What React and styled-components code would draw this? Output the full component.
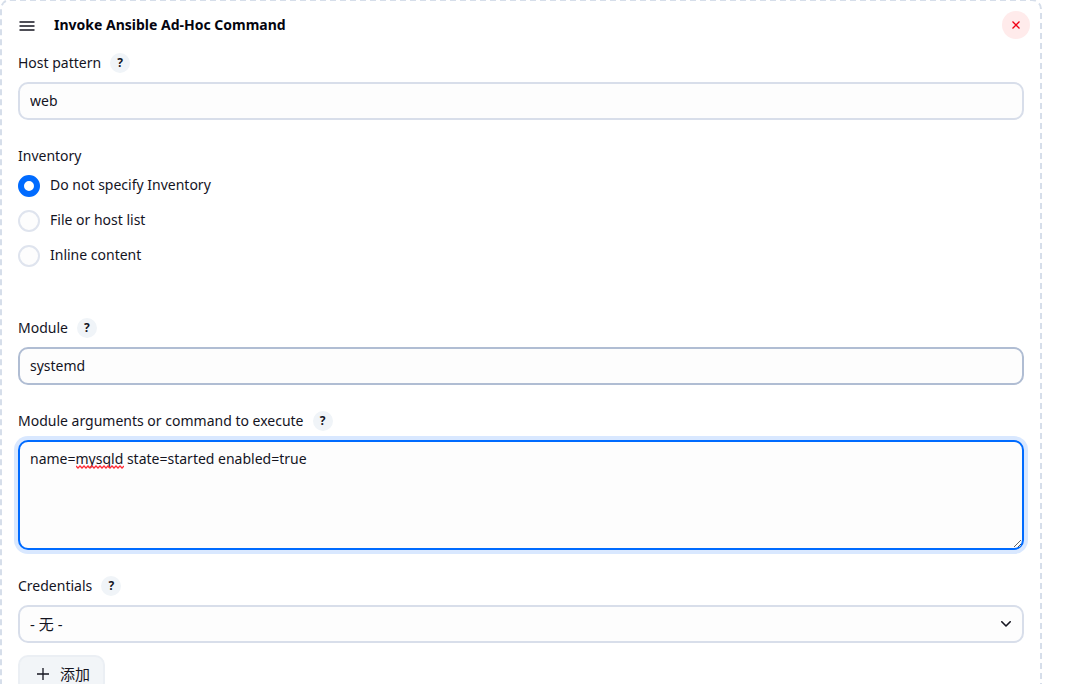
import { useState } from 'react'
import styled, { createGlobalStyle } from 'styled-components'

const inventoryOptions = [
    { value: 'none', label: 'Do not specify Inventory' },
    { value: 'path', label: 'File or host list' },
    { value: 'content', label: 'Inline content' },
]

export default function App() {
    const [host, setHost] = useState('web')
    const [inventory, setInventory] = useState('none')
    const [moduleName, setModuleName] = useState('systemd')
    const [args, setArgs] = useState('name=mysqld state=started enabled=true')

    return (
        <>
            <GlobalStyle />
            <StepCard>
                <StepHeader>
                    <DragIcon viewBox="0 0 16 12" aria-hidden="true">
                        <path d="M0.5 2h15M0.5 6h15M0.5 10h15" />
                    </DragIcon>
                    <StepTitle>Invoke Ansible Ad-Hoc Command</StepTitle>
                    <CloseButton type="button" aria-label="Delete">
                        <svg width="8" height="8" viewBox="0 0 8 8" aria-hidden="true">
                            <path d="M0.5 0.5l7 7M7.5 0.5l-7 7" />
                        </svg>
                    </CloseButton>
                </StepHeader>

                <Field>
                    <LabelRow>
                        <label htmlFor="host">Host pattern</label>
                        <HelpButton type="button" aria-label="Help for Host pattern">?</HelpButton>
                    </LabelRow>
                    <TextInput id="host" value={host} onChange={(e) => setHost(e.target.value)} />
                </Field>

                <RadioGroup>
                    <Legend>Inventory</Legend>
                    <RadioList>
                        {inventoryOptions.map(({ value, label }) => (
                            <RadioLabel key={value}>
                                <Radio
                                    name="inventory"
                                    value={value}
                                    checked={inventory === value}
                                    onChange={() => setInventory(value)}
                                />
                                <span>{label}</span>
                            </RadioLabel>
                        ))}
                    </RadioList>
                </RadioGroup>

                <Field>
                    <LabelRow>
                        <label htmlFor="module">Module</label>
                        <HelpButton type="button" aria-label="Help for Module">?</HelpButton>
                    </LabelRow>
                    <TextInput
                        id="module"
                        $hovered
                        value={moduleName}
                        onChange={(e) => setModuleName(e.target.value)}
                    />
                </Field>

                <Field>
                    <LabelRow>
                        <label htmlFor="args">Module arguments or command to execute</label>
                        <HelpButton type="button" aria-label="Help for Module arguments">?</HelpButton>
                    </LabelRow>
                    <TextAreaWrapper>
                        <TextArea
                            id="args"
                            spellCheck={false}
                            value={args}
                            onChange={(e) => setArgs(e.target.value)}
                        />
                        <Squiggle viewBox="0 0 48 4" aria-hidden="true">
                            <path d="M0 1l2 2l2 -2l2 2l2 -2l2 2l2 -2l2 2l2 -2l2 2l2 -2l2 2l2 -2l2 2l2 -2l2 2l2 -2l2 2l2 -2l2 2l2 -2l2 2l2 -2l2 2l2 -2" />
                        </Squiggle>
                    </TextAreaWrapper>
                </Field>

                <Field>
                    <LabelRow>
                        <label htmlFor="credentials">Credentials</label>
                        <HelpButton type="button" aria-label="Help for Credentials">?</HelpButton>
                    </LabelRow>
                    <SelectWrapper>
                        <Select id="credentials" defaultValue="">
                            <option value="">- 无 -</option>
                        </Select>
                        <Chevron viewBox="0 0 10 6" aria-hidden="true">
                            <path d="M0.8 0.8l4.2 4.2l4.2 -4.2" />
                        </Chevron>
                    </SelectWrapper>
                    <AddButton type="button">
                        <svg width="12" height="12" viewBox="0 0 12 12" aria-hidden="true">
                            <path d="M6 0v12M0 6h12" />
                        </svg>
                        添加
                    </AddButton>
                </Field>
            </StepCard>
        </>
    )
}

const GlobalStyle = createGlobalStyle`
    * {
        box-sizing: border-box;
    }
    body {
        margin: 0;
        overflow: hidden;
        background: #fff;
        color: #14141f;
        font-family: "Noto Sans", "Noto Sans CJK SC", sans-serif;
        font-size: 14px;
        line-height: 22px;
    }
    button, input, select, textarea {
        font: inherit;
        color: inherit;
    }
`

const StepCard = styled.section`
    margin: -1px 48px 0 0;
    padding: 10px 16px 24px;
    border: 2px dashed #d6deea;
    border-radius: 10px;
`

const StepHeader = styled.header`
    display: flex;
    align-items: center;
    height: 28px;
    margin: 0 -6px 13px 1px;
`

const DragIcon = styled.svg`
    width: 16px;
    height: 12px;
    margin: 2px 19px 0 0;
    fill: none;
    stroke: #14141f;
    stroke-width: 1.5;
`

const StepTitle = styled.h2`
    flex: 1;
    margin: 0;
    font-size: 14px;
    font-weight: 700;
    color: #05050f;
`

const CloseButton = styled.button`
    display: grid;
    place-items: center;
    width: 28px;
    height: 28px;
    padding: 0;
    border: 0;
    border-radius: 50%;
    background: #ffebeb;

    path {
        stroke: #f00014;
        stroke-width: 1.3;
    }
`

const Field = styled.div`
    margin-bottom: 25px;
`

const LabelRow = styled.div`
    display: flex;
    align-items: center;
    gap: 9px;
    margin-bottom: 8px;
`

const HelpButton = styled.button`
    width: 20px;
    height: 20px;
    padding: 0;
    border: 0;
    border-radius: 50%;
    background: #f0f4f8;
    font-size: 12px;
    font-weight: 700;
    line-height: 20px;
    text-align: center;
`

const TextInput = styled.input.attrs({ type: 'text' })`
    display: block;
    width: 100%;
    height: 38px;
    padding: 0 10px 2px;
    border: 2px solid ${({ $hovered }) => ($hovered ? '#b0bdd3' : '#d8deea')};
    border-radius: 10px;
    outline: none;
    background: #fdfdfd;
`

const RadioGroup = styled.fieldset`
    margin: 0 0 50px;
    padding: 0;
    border: 0;
`

const Legend = styled.legend`
    margin-bottom: 8px;
    padding: 0;
`

const RadioList = styled.div`
    display: flex;
    flex-direction: column;
    align-items: flex-start;
    gap: 13px;
`

const RadioLabel = styled.label`
    display: flex;
    gap: 10px;
    line-height: 20px;
`

const Radio = styled.input.attrs({ type: 'radio' })`
    appearance: none;
    width: 22px;
    height: 22px;
    margin: 0;
    border: 2px solid #dfe4ee;
    border-radius: 50%;
    background: #fdfdfd;

    &:checked {
        border: 6px solid #006bff;
        background: #fff;
    }
`

const TextAreaWrapper = styled.div`
    position: relative;
`

const TextArea = styled.textarea`
    display: block;
    width: 100%;
    height: 110px;
    padding: 6px 10px;
    border: 2px solid #006bff;
    border-radius: 10px;
    outline: none;
    background: #fdfdfd;
    box-shadow: 0 0 0 4px #d9e8ff;
    resize: vertical;
`

const Squiggle = styled.svg`
    position: absolute;
    top: 25px;
    left: 58px;
    width: 48px;
    height: 4px;
    fill: none;
    stroke: #ff2a35;
    stroke-width: 1.3;
    pointer-events: none;
`

const SelectWrapper = styled.div`
    position: relative;
`

const Select = styled.select`
    appearance: none;
    display: block;
    width: 100%;
    height: 38px;
    padding: 0 36px 0 10px;
    border: 2px solid #d8deea;
    border-radius: 10px;
    background: #fdfdfd;
    font-size: 15px;
`

const Chevron = styled.svg`
    position: absolute;
    top: 16px;
    right: 13px;
    width: 10px;
    height: 6px;
    fill: none;
    stroke: #14141f;
    stroke-width: 1.6;
    stroke-linecap: round;
    stroke-linejoin: round;
    pointer-events: none;
`

const AddButton = styled.button`
    display: flex;
    align-items: center;
    gap: 11px;
    height: 38px;
    margin-top: 12px;
    padding: 0 13px 0 17px;
    border: 2px solid #ebeff4;
    border-radius: 10px;
    background: #f2f5f8;
    font-size: 15px;

    path {
        stroke: #14141f;
        stroke-width: 1.3;
    }
`
